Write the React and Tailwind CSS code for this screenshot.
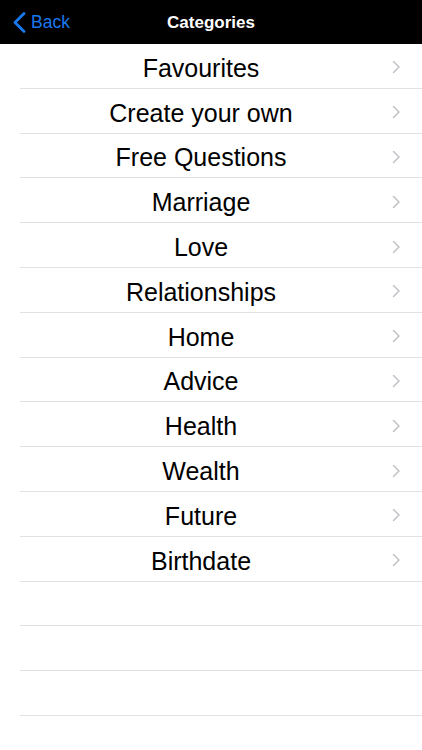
import React from 'react';

const categories = [
  'Favourites',
  'Create your own',
  'Free Questions',
  'Marriage',
  'Love',
  'Relationships',
  'Home',
  'Advice',
  'Health',
  'Wealth',
  'Future',
  'Birthdate',
];

const Chevron = () => (
  <svg width="9" height="14" viewBox="0 0 9 14" fill="none">
    <path d="M1.5 1.5L7 7L1.5 12.5" stroke="#c4c4c8" strokeWidth="1.6" strokeLinecap="round" strokeLinejoin="round" />
  </svg>
);

const App = () => {
  return (
    <div className="w-[422px] h-[750px] bg-white overflow-hidden" style={{ fontFamily: '"Liberation Sans", Arial, sans-serif' }}>
      {/* Nav bar */}
      <div className="h-[44px] bg-black flex items-center relative">
        <div className="flex items-center pl-[13px] gap-[5px] pt-[1px]">
          <svg width="13" height="21" viewBox="0 0 13 21" fill="none">
            <path d="M11 1.5L2 10.5L11 19.5" stroke="#1a78ef" strokeWidth="2.8" strokeLinecap="round" strokeLinejoin="round" />
          </svg>
          <span className="text-[17.5px] text-[#1a78ef]">Back</span>
        </div>
        <div className="absolute inset-0 flex items-center justify-center pointer-events-none pt-[2px]">
          <span className="text-[17px] font-bold text-white">Categories</span>
        </div>
      </div>

      {/* List */}
      <div className="pl-[20px]">
        {categories.map((c) => (
          <div key={c} className="h-[44.8px] border-b border-[#e2e2e4] flex items-center">
            <div className="flex-1 text-center text-[25px] text-black leading-none pt-[5px]">{c}</div>
            <div className="w-[40px] flex items-center justify-start pl-[10px] pt-[3px]">
              <Chevron />
            </div>
          </div>
        ))}
        {[0, 1, 2].map((i) => (
          <div key={i} className="h-[44.8px] border-b border-[#e2e2e4]" />
        ))}
      </div>
    </div>
  );
};

export default App;
